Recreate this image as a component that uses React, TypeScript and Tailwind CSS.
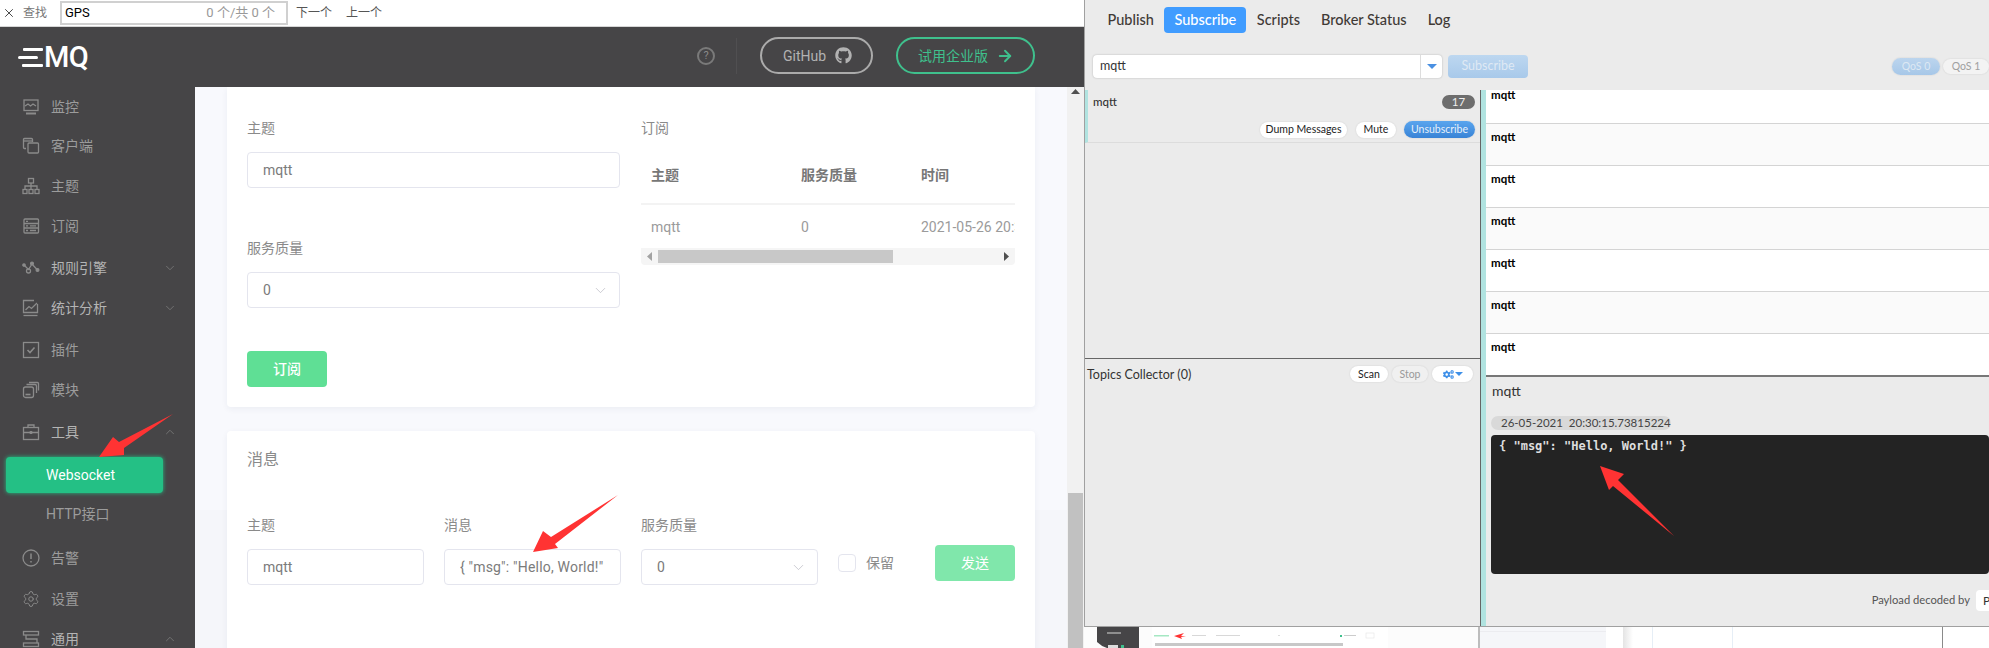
import { ArrowRight, ChevronDown, ChevronUp, Settings, X } from "lucide-react";
import { FaCogs, FaGithub } from "react-icons/fa";
import type { ReactNode } from "react";

const cn = "font-['Roboto','Noto_Sans_CJK_SC',sans-serif]";

function Glyph({ children }: { children: ReactNode }) {
    return (
        <svg width="18" height="18" viewBox="0 0 18 18" fill="none" stroke="#8b8b8b" strokeWidth="1.3" className="shrink-0">
            {children}
        </svg>
    );
}

const icons: Record<string, ReactNode> = {
    monitor: (
        <Glyph>
            <rect x="2" y="2" width="14" height="10.5" />
            <path d="M3 8l3-2 2.5 2 2.5-2 3 2" />
            <path d="M4 15.5h10" strokeWidth="2" />
        </Glyph>
    ),
    client: (
        <Glyph>
            <path d="M4 11.5H2.5a1 1 0 0 1-1-1v-8a1 1 0 0 1 1-1h7a1 1 0 0 1 1 1V5" />
            <rect x="6" y="6" width="10.5" height="10" rx="1" />
            <path d="M1.5 4h9" />
        </Glyph>
    ),
    topic: (
        <Glyph>
            <rect x="6.5" y="1.5" width="5" height="4.5" />
            <rect x="1" y="12.5" width="4" height="4" />
            <rect x="7" y="12.5" width="4" height="4" />
            <rect x="13" y="12.5" width="4" height="4" />
            <path d="M3 12.5V9h12v3.500M9 6v6.500" />
        </Glyph>
    ),
    subscription: (
        <Glyph>
            <rect x="2" y="2" width="14.500" height="14" rx="1" />
            <path d="M2 6.500h14.500M2 11h14.500" />
            <path d="M4 4.300h2M4 8.800h2M4 13.500h2M8 8.800h6M8 13.500h6" />
        </Glyph>
    ),
    rule: (
        <Glyph>
            <path d="M2 6l4.500 4.500L10 5l5.500 6" />
            <circle cx="2" cy="6" r="1.200" fill="#8b8b8b" />
            <circle cx="6.500" cy="12" r="2" />
            <circle cx="10" cy="4.500" r="1.400" fill="#8b8b8b" />
            <circle cx="15.500" cy="11" r="1.400" fill="#8b8b8b" />
        </Glyph>
    ),
    stats: (
        <Glyph>
            <path d="M15.500 5v8.500h-14v-12H12" />
            <path d="M3.500 11l3.500-3.500 2.500 2L15 4" />
            <path d="M1.500 16.500h14" />
        </Glyph>
    ),
    plugin: (
        <Glyph>
            <rect x="1.500" y="1.500" width="15" height="15" />
            <path d="M5.500 9l2.500 2.500 4.500-5" strokeWidth="1.600" />
        </Glyph>
    ),
    module: (
        <Glyph>
            <rect x="1.500" y="6" width="10" height="10.500" rx="2" />
            <path d="M4.500 3.500h8.500a1.500 1.500 0 0 1 1.500 1.500v7" />
            <path d="M7 1.500h8.500a1 1 0 0 1 1 1v7" />
            <path d="M3.500 13.500h5" strokeWidth="1.600" />
        </Glyph>
    ),
    tools: (
        <Glyph>
            <rect x="1.500" y="4.500" width="15" height="12" />
            <path d="M6 4.500V2h6v2.500M1.500 9.500h15" />
            <path d="M9 8v3M7.500 9.500h3" strokeWidth="1.800" />
        </Glyph>
    ),
    alarm: (
        <Glyph>
            <circle cx="9" cy="9" r="8" />
            <path d="M9 4.500v5.500M9 12v1.500" strokeWidth="1.500" />
        </Glyph>
    ),
    common: (
        <Glyph>
            <rect x="1.500" y="1.500" width="15" height="3.500" />
            <rect x="1.500" y="13" width="15" height="3.500" />
            <path d="M4 5v4h11v4" />
        </Glyph>
    ),
};

type NavItem = { label: string; icon?: string; size: string; chevron?: "down" | "up"; bright?: boolean };

const navTop: NavItem[] = [
    { label: "监控", icon: "monitor", size: "h-[39px]" },
    { label: "客户端", icon: "client", size: "h-10" },
    { label: "主题", icon: "topic", size: "h-10" },
    { label: "订阅", icon: "subscription", size: "h-10" },
    { label: "规则引擎", icon: "rule", size: "h-[44px]", chevron: "down", bright: true },
    { label: "统计分析", icon: "stats", size: "h-[36px]", chevron: "down", bright: true },
    { label: "插件", icon: "plugin", size: "h-[47px]" },
    { label: "模块", icon: "module", size: "h-[34px]" },
    { label: "工具", icon: "tools", size: "h-[50px]", chevron: "up", bright: true },
];

const navBottom: NavItem[] = [
    { label: "告警", icon: "alarm", size: "h-10" },
    { label: "设置", icon: "settings", size: "h-[41px]" },
    { label: "通用", icon: "common", size: "h-10", chevron: "up", bright: true },
];

function NavRow({ item }: { item: NavItem }) {
    return (
        <div className={`flex items-center pl-[22px] pr-[18px] shrink-0 ${item.size}`}>
            {item.icon === "settings" ? <Settings size={18} strokeWidth={1.3} color="#8b8b8b" className="shrink-0" /> : item.icon && icons[item.icon]}
            <span className={`ml-[11px] text-sm ${item.bright ? "text-[#b4b4b4]" : "text-[#9c9c9c]"}`}>{item.label}</span>
            {item.chevron === "down" && <ChevronDown size={14} strokeWidth={1.3} color="#7f7f7f" className="ml-auto" />}
            {item.chevron === "up" && <ChevronUp size={14} strokeWidth={1.3} color="#7f7f7f" className="ml-auto" />}
        </div>
    );
}

function Sidebar() {
    return (
        <aside className="w-[195px] shrink-0 bg-[#464547] flex flex-col overflow-hidden">
            {navTop.map((item) => (
                <NavRow key={item.label} item={item} />
            ))}
            <div className="mx-[6px] h-9 w-[157px] shrink-0 rounded bg-[#24c085] shadow-[0_0_4px_#24c085] flex items-center pl-10 text-sm text-white">
                Websocket
            </div>
            <div className="h-[45px] shrink-0 flex items-center pl-[46px] pb-[3px] text-sm text-[#9c9c9c]">HTTP接口</div>
            {navBottom.map((item) => (
                <NavRow key={item.label} item={item} />
            ))}
        </aside>
    );
}

function Field({ value, chevron, className }: { value: string; chevron?: boolean; className?: string }) {
    return (
        <div className={`h-9 rounded border border-[#e4e5ee] bg-white flex items-center pl-[15px] pr-[10px] text-sm text-[#7b7b7b] whitespace-nowrap overflow-hidden ${className ?? ""}`}>
            <span>{value}</span>
            {chevron && <ChevronDown size={17} strokeWidth={1} color="#b8b8c0" className="ml-auto" />}
        </div>
    );
}

function Triangle({ dir }: { dir: "left" | "right" }) {
    return (
        <svg width="5" height="9" viewBox="0 0 5 9" fill={dir === "left" ? "#a3a3a3" : "#505050"}>
            <path d={dir === "left" ? "M5 0v9L0 4.500z" : "M0 0v9l5-4.500z"} />
        </svg>
    );
}

function SubscribeCard() {
    return (
        <section className="h-[320px] shrink-0 rounded-b bg-white shadow-[0_2px_6px_rgba(40,50,90,0.06)] pt-[31px] px-5 flex gap-[21px]">
            <div className="w-[373px]">
                <div className="h-5 leading-5 text-sm text-[#8a8a8a]">主题</div>
                <Field value="mqtt" className="mt-[14px]" />
                <div className="h-5 leading-5 text-sm text-[#8a8a8a] mt-[50px]">服务质量</div>
                <Field value="0" chevron className="mt-[14px]" />
                <button className="mt-[43px] h-9 w-20 rounded bg-[#5fdf95] text-sm font-medium text-white">订阅</button>
            </div>
            <div className="w-[374px]">
                <div className="h-5 leading-5 text-sm text-[#8a8a8a]">订阅</div>
                <div className="mt-[10px] h-[57px] flex items-center pl-[10px] pb-[2px] border-b-2 border-[#f3f3f3] text-sm font-bold text-[#777]">
                    <span className="w-[150px]">主题</span>
                    <span className="w-[120px]">服务质量</span>
                    <span>时间</span>
                </div>
                <div className="h-[43px] flex items-center pl-[10px] text-sm text-[#9b9b9b] overflow-hidden whitespace-nowrap">
                    <span className="w-[150px] shrink-0">mqtt</span>
                    <span className="w-[120px] shrink-0">0</span>
                    <span>2021-05-26 20:30:15</span>
                </div>
                <div className="h-[17px] rounded-b bg-[#f5f5f5] flex items-center">
                    <div className="w-[17px] flex justify-center">
                        <Triangle dir="left" />
                    </div>
                    <div className="h-[13px] w-[235px] bg-[#c8c8c8]" />
                    <div className="ml-auto w-[17px] flex justify-center">
                        <Triangle dir="right" />
                    </div>
                </div>
            </div>
        </section>
    );
}

function MessageCard() {
    return (
        <section className="h-[300px] shrink-0 mt-6 rounded-t bg-white shadow-[0_2px_6px_rgba(40,50,90,0.06)] pt-[19px] px-5">
            <div className="h-5 leading-5 text-base text-[#8a8a8a]">消息</div>
            <div className="mt-[45px] flex items-end gap-5">
                <div className="w-[177px]">
                    <div className="h-5 leading-5 text-sm text-[#8a8a8a] mb-[14px]">主题</div>
                    <Field value="mqtt" />
                </div>
                <div className="w-[177px]">
                    <div className="h-5 leading-5 text-sm text-[#8a8a8a] mb-[14px]">消息</div>
                    <input
                        readOnly
                        value={'{ "msg": "Hello, World!" }'}
                        className="h-9 w-full rounded border border-[#e4e5ee] bg-white px-[15px] text-sm tracking-[0.2px] text-[#7b7b7b] outline-none"
                    />
                </div>
                <div className="w-[177px]">
                    <div className="h-5 leading-5 text-sm text-[#8a8a8a] mb-[14px]">服务质量</div>
                    <Field value="0" chevron />
                </div>
                <div className="mb-1 h-9 flex items-center gap-[10px] w-[77px]">
                    <span className="w-[18px] h-[18px] rounded border border-[#e4e5ee] bg-white" />
                    <span className="text-sm text-[#8a8a8a]">保留</span>
                </div>
                <button className="mb-1 h-9 w-20 rounded bg-[#80e7ab] text-sm text-white">发送</button>
            </div>
        </section>
    );
}

function FindBar() {
    return (
        <div className="h-[27px] shrink-0 bg-white border-b border-[#d6d6d6] flex items-center text-xs text-[#555] pb-[1px]">
            <X size={14} strokeWidth={1.4} color="#222" className="ml-[2px]" />
            <span className="ml-[7px] text-[#777]">查找</span>
            <div className="ml-[13px] w-[228px] h-[24px] border-2 border-[#d0d0d0] flex items-center pl-[3px] pr-[11px] text-[13px] text-black">
                GPS
                <span className="ml-auto text-[#999]">0 个/共 0 个</span>
            </div>
            <span className="ml-[8px]">下一个</span>
            <span className="ml-[14px]">上一个</span>
        </div>
    );
}

function Header() {
    return (
        <header className="h-[60px] shrink-0 bg-[#464547] flex items-center pl-[18px] pr-[49px] pb-[3px]">
            <div className="flex items-center mt-[3px]">
                <svg width="25" height="21" viewBox="0 0 25 21" fill="#fff">
                    <rect x="5" y="1" width="20" height="3" rx="1" />
                    <rect x="0" y="9" width="20" height="3" rx="1.500" />
                    <rect x="4" y="17" width="21" height="3" rx="1" />
                </svg>
                <span className="ml-[1px] text-[29px] leading-none font-medium text-white tracking-[-0.5px]">MQ</span>
            </div>
            <span className="ml-auto w-[18px] h-[18px] rounded-full border-2 border-[#7a7a7a] flex items-center justify-center text-[11px] leading-none text-[#8a8a8a]">?</span>
            <span className="ml-[21px] h-9 w-px bg-[#504f51]" />
            <a className="ml-[23px] h-[37px] w-[113px] rounded-full border-2 border-[#ababab] flex items-center pl-[21px] text-sm text-[#b2b2b2]">
                GitHub
                <FaGithub size={17} className="ml-[9px]" />
            </a>
            <a className="ml-[23px] h-[37px] w-[139px] rounded-full border-2 border-[#3fc08d] flex items-center pl-[20px] text-sm text-[#3fc08d]">
                试用企业版
                <ArrowRight size={18} strokeWidth={2.5} className="ml-[8px]" />
            </a>
        </header>
    );
}

function BrokerTabs() {
    const tabs = ["Publish", "Subscribe", "Scripts", "Broker Status", "Log"];
    return (
        <div className="mt-[7px] pl-[12px] flex h-[26px]">
            {tabs.map((t) => (
                <span
                    key={t}
                    className={
                        t === "Subscribe"
                            ? "px-[10px] rounded bg-[#409cff] text-white flex items-center text-[14.5px] font-medium"
                            : "px-[10.5px] text-[#3f3a36] flex items-center text-[14.5px] font-medium"
                    }
                >
                    {t}
                </span>
            ))}
        </div>
    );
}

function Pill({ children, className }: { children: ReactNode; className?: string }) {
    return (
        <span className={`h-4 rounded-full flex items-center justify-center text-[10.5px] leading-none shadow-[0_0_2px_rgba(0,0,0,0.12)] ${className ?? ""}`}>
            {children}
        </span>
    );
}

function TopicRows() {
    const rows = [0, 1, 2, 3, 4, 5, 6];
    return (
        <div className="h-[286px] overflow-hidden bg-white">
            <div className="-mt-[8px]">
                {rows.map((r) => (
                    <div key={r} className={`h-[42px] pt-[6px] pl-[5px] border-b text-[11.500px] leading-[14px] font-bold text-black ${r % 2 ? "bg-[#fafafa]" : "bg-white"} ${r === 6 ? "border-[#777]" : "border-[#d4d4d4]"}`}>
                        mqtt
                    </div>
                ))}
            </div>
        </div>
    );
}

function Thumbnail() {
    // shrunken copy of the page that shows under the tool window
    return (
        <svg width="396" height="21" viewBox="0 0 396 21" className="shrink-0">
            <rect width="396" height="21" fill="#fcfcfc" />
            <path d="M13 0h42v21H23q-6-2-10-6z" fill="#464547" />
            <rect x="68" y="0" width="236" height="21" fill="#fff" />
            <rect x="23" y="5" width="14" height="2" fill="#8e8e8e" />
            <rect x="24" y="18" width="10" height="3" fill="#ddd" />
            <rect x="37" y="18" width="3" height="3" fill="#3fc08d" />
            <rect x="70" y="8" width="15" height="1.500" fill="#a5e8c3" />
            <path d="M90 9l10-3-3 3 5 0-5 1 1 2z" fill="#ff3333" />
            <rect x="108" y="8" width="14" height="1" fill="#d8d8d8" />
            <rect x="132" y="8" width="24" height="1" fill="#d8d8d8" />
            <rect x="194" y="8" width="2" height="1" fill="#ddd" />
            <rect x="256" y="8" width="2" height="2" fill="#3fc08d" />
            <rect x="260" y="8" width="12" height="1" fill="#ccc" />
            <rect x="282" y="6" width="8" height="5" fill="#fff" stroke="#e0e0e0" strokeWidth="0.500" />
            <rect x="71" y="16" width="188" height="3" fill="#c8c8c8" />
            <rect x="394" y="0" width="2" height="21" fill="#bdbdbd" />
        </svg>
    );
}

export default function App() {
    return (
        <div className={`w-[1989px] h-[648px] relative overflow-hidden flex bg-white ${cn}`}>
            {/* browser tab on the left */}
            <div className="w-[1084px] shrink-0 flex flex-col h-full">
                <FindBar />
                <Header />
                <div className="flex flex-1 min-h-0">
                    <Sidebar />
                    <main className="flex-1 min-w-0 px-8 overflow-hidden flex flex-col bg-[linear-gradient(#f8f9fd_423px,#f5f6fa_423px)]">
                        <SubscribeCard />
                        <MessageCard />
                    </main>
                    <div className="w-[17px] shrink-0 bg-[#f1f1f1] flex flex-col items-center pt-[2px]">
                        <svg width="9" height="5" viewBox="0 0 9 5" fill="#505050">
                            <path d="M0 5h9L4.500 0z" />
                        </svg>
                        <div className="mt-auto h-[155px] w-[15px] bg-[#c1c1c1]" />
                    </div>
                </div>
            </div>

            {/* MQTT.fx window on the right */}
            <div className="flex-1 min-w-0 flex flex-col h-full font-['Lato','Noto_Sans',sans-serif]">
                <div className="h-[627px] shrink-0 bg-[#ebebeb] border-l border-b border-[#a0a0a0] flex flex-col overflow-hidden">
                    <div className="h-[90px] shrink-0">
                        <BrokerTabs />
                        <div className="mt-[22px] pl-[8px] flex items-center">
                            <div className="h-[23px] w-[349px] rounded-sm bg-white shadow-[0_0_2px_rgba(0,0,0,0.25)] flex items-center pl-[7px] text-[12.500px] text-[#333]">
                                mqtt
                                <span className="ml-auto h-full w-[22px] border-l border-[#ddd] flex items-center justify-center">
                                    <span className="w-0 h-0 border-x-[5px] border-x-transparent border-t-[5px] border-t-[#4a90e2]" />
                                </span>
                            </div>
                            <button className="ml-[6px] h-[23px] w-20 rounded bg-gradient-to-b from-[#bdd7f0] to-[#a8c9ea] text-[12.500px] text-[#dfe9f4]">Subscribe</button>
                            <Pill className="ml-auto w-12 !h-[17px] bg-gradient-to-b from-[#bcd5ee] to-[#a6c7e8] text-[#dde8f3]">QoS 0</Pill>
                            <Pill className="ml-[3px] w-[46px] !h-[15px] bg-[#f3f3f3] text-[#a0a0a0]">QoS 1</Pill>
                        </div>
                    </div>

                    <div className="flex-1 min-h-0 flex">
                        <div className="w-[396px] shrink-0 border-r border-[#666] flex flex-col">
                            <div className="h-[268px] shrink-0">
                                <div className="h-[53px] border-l-[3px] border-l-[#b0e3e0] border-b border-b-[#dcdcdc] pl-[5px] pr-[5px] pt-[5px]">
                                    <div className="flex items-center justify-between h-[14px]">
                                        <span className="text-[11.500px] font-medium text-[#333]">mqtt</span>
                                        <span className="w-[33px] h-[14px] rounded-full bg-[#6d6d6d] text-[11.500px] leading-[14px] text-center text-[#eee]">17</span>
                                    </div>
                                    <div className="mt-[12px] flex justify-end items-center">
                                        <Pill className="w-[87px] bg-white text-[#222]">Dump Messages</Pill>
                                        <Pill className="ml-[9px] w-10 bg-white text-[#222]">Mute</Pill>
                                        <Pill className="ml-2 w-[71px] !h-[17px] bg-gradient-to-b from-[#5aa5ee] to-[#3883d6] text-[#e6f0fa]">Unsubscribe</Pill>
                                    </div>
                                </div>
                            </div>
                            <div className="flex-1 border-t border-[#666] pl-[2px] pr-[7px] pt-[7px]">
                                <div className="flex items-center">
                                    <span className="text-[12.500px] leading-[15px] text-[#333]">Topics Collector (0)</span>
                                    <Pill className="ml-auto w-[38px] bg-white text-[#222]">Scan</Pill>
                                    <Pill className="ml-1 w-9 bg-[#f0f0f0] text-[#9a9a9a]">Stop</Pill>
                                    <Pill className="ml-1 w-[41px] bg-white text-[#3d8fe8] gap-[1px]">
                                        <FaCogs size={11} />
                                        <span className="w-0 h-0 border-x-[4px] border-x-transparent border-t-[4px] border-t-[#3d8fe8]" />
                                    </Pill>
                                </div>
                            </div>
                        </div>

                        <div className="flex-1 min-w-0 border-l-[5px] border-[#b0e3e0] flex flex-col">
                            <TopicRows />
                            <div className="flex-1 border-t border-[#777] pt-[5px] pl-[5px]">
                                <div className="h-[18px] leading-[18px] pl-[1px] text-[14px] text-[#333]">mqtt</div>
                                <div className="mt-[16px] h-[14px] w-[180px] rounded-full bg-[#d9d9d9] pl-[10px] text-[11.500px] leading-[14px] text-[#444] whitespace-pre">26-05-2021  20:30:15.73815224</div>
                                <div className="mt-[5px] h-[139px] rounded-sm bg-[#232323] pl-[8px] pt-[1px] font-['DejaVu_Sans_Mono',monospace] text-[12px] leading-[20px] font-bold text-[#dedede]">
                                    {'{ "msg": "Hello, World!" }'}
                                </div>
                                <div className="mt-[16px] h-[21px] flex items-center justify-end gap-[6px] text-[11.200px] text-[#555]">
                                    Payload decoded by
                                    <span className="h-[21px] w-[13px] rounded-l bg-white pl-[7px] overflow-hidden text-[12px] leading-[21px] text-[#333]">P</span>
                                </div>
                            </div>
                        </div>
                    </div>
                </div>

                <div className="flex-1 flex">
                    <Thumbnail />
                    <div className="w-[126px] shrink-0 bg-[#f5f6f9] pt-[4px]">
                        <div className="h-px bg-[#ececf0]" />
                    </div>
                    <div className="w-[17px] shrink-0 bg-white" />
                    <div className="w-[10px] shrink-0 bg-gradient-to-r from-[#e4e4e4] to-white" />
                    <div className="w-[20px] shrink-0 bg-white border-r border-[#e6eef6]" />
                    <div className="w-[80px] shrink-0 bg-white border-r border-[#e6eef6]" />
                    <div className="w-[210px] shrink-0 bg-white border-r border-[#8a8a8a]" />
                    <div className="flex-1 bg-white" />
                </div>
            </div>

            {/* annotation arrows drawn on the screenshot */}
            <svg width="1989" height="648" viewBox="0 0 1989 648" fill="#ff3333" className="absolute inset-0 pointer-events-none">
                <polygon points="99,457 113,437 119,442 173,414 124,448 124,455" />
                <polygon points="533,552 543,531 551,537 618,495 555,544 558,548" />
                <polygon points="1600,466 1624,474 1618,480 1674,536 1613,486 1609,490" />
            </svg>
        </div>
    );
}
